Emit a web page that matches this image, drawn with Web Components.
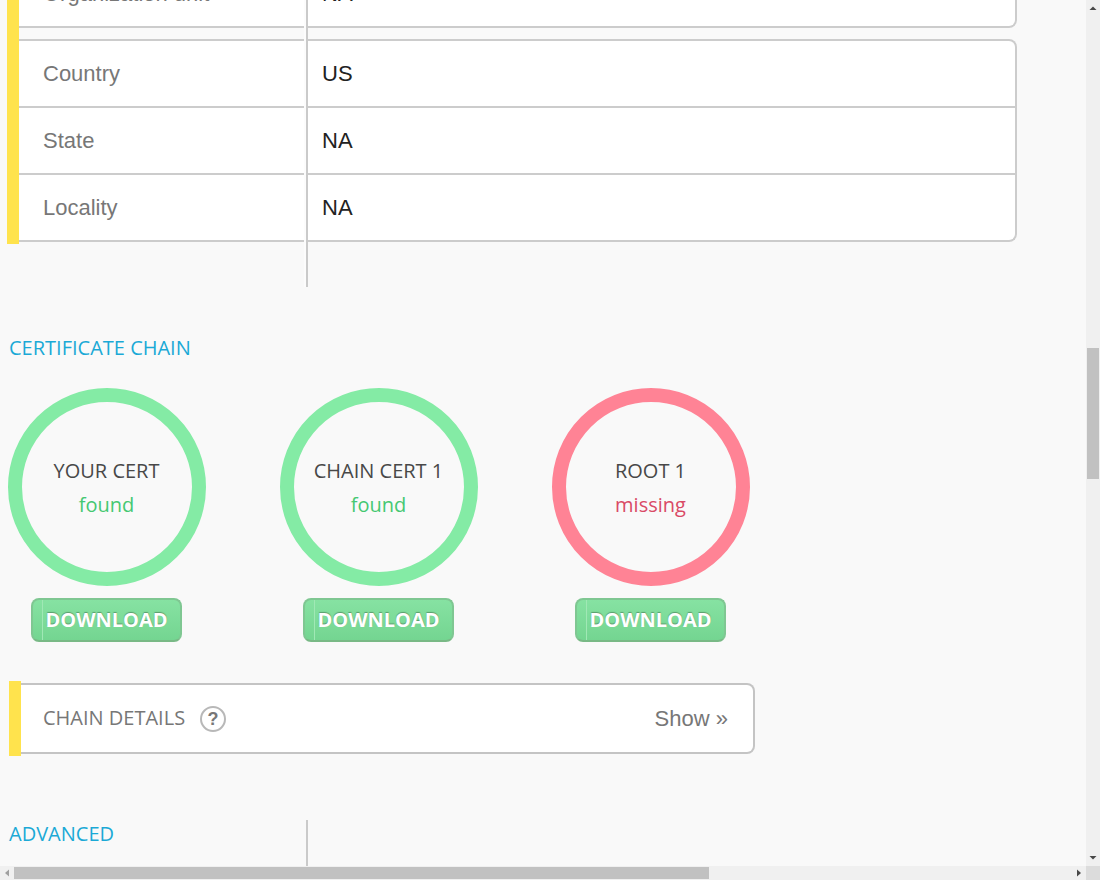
<!DOCTYPE html>
<html lang="en">
<head>
<meta charset="utf-8">
<meta name="viewport" content="width=device-width, initial-scale=1">
<title>Certificate check</title>
<style>
  html, body { margin: 0; height: 100%; }
  body { background: #f9f9f9; color: #222; font-family: "Liberation Sans", Arial, sans-serif; font-size: 22px; --title-font: "Open Sans", "Noto Sans", sans-serif; --line: #cccccc; --accent: #ffe34d; }
</style>
</head>
<body>
<scroll-frame>
  <cert-table></cert-table>
  <section-title>CERTIFICATE CHAIN</section-title>
  <chain-list>
    <chain-cert name="YOUR CERT" status="found"></chain-cert>
    <chain-cert name="CHAIN CERT 1" status="found"></chain-cert>
    <chain-cert name="ROOT 1" status="missing"></chain-cert>
  </chain-list>
  <detail-panel>CHAIN DETAILS</detail-panel>
  <section-title ruled>ADVANCED</section-title>
</scroll-frame>
<script>
function define(name, render) {
  customElements.define(name, class extends HTMLElement {
    constructor() { super(); this.attachShadow({ mode: "open" }); }
    connectedCallback() { this.shadowRoot.innerHTML = render(this); }
  });
}

/* Window frame: a clipped viewport with its two scrollbars */
define("scroll-frame", () => `
<style>
  :host { display: grid; grid-template: minmax(0, 1fr) 14px / minmax(0, 1fr) 14px; height: 100vh; }
  main { overflow: hidden; }
  scroll-bar { min-width: 0; }
  .corner { background: #dcdcdc; }
</style>
<main><slot></slot></main>
<scroll-bar axis="y"></scroll-bar>
<scroll-bar axis="x"></scroll-bar>
<div class="corner"></div>`);

define("scroll-bar", el => {
  const y = el.getAttribute("axis") === "y";
  const before = y ? "M3.5 10 L7 6.5 L10.5 10Z" : "M9 3.5 L5 7 L9 10.5Z";
  const after = y ? "M3.5 4 L7 7.5 L10.5 4Z" : "M5 3.5 L9 7 L5 10.5Z";
  return `
<style>
  :host { display: flex; flex-direction: ${y ? "column" : "row"}; background: #f0f0f0; }
  svg { flex: none; width: 14px; height: 14px; fill: #484848; }
  .off { fill: #a0a0a0; }
  .track { flex: 1; display: flex; flex-direction: ${y ? "column" : "row"}; ${y ? "padding: 0 1px" : "padding: 1px 0"}; }
  .gap { flex: ${y ? "334" : "0"}; }
  .thumb { flex: ${y ? "131" : "695"}; background: #c1c1c1; }
  .rest { flex: ${y ? "373" : "363"}; }
</style>
<svg viewBox="0 0 14 14" class="${y ? "" : "off"}"><path d="${before}"/></svg>
<div class="track"><div class="gap"></div><div class="thumb"></div><div class="rest"></div></div>
<svg viewBox="0 0 14 14"><path d="${after}"/></svg>`;
});

/* Subject fields; the list is scrolled so that its first row is cut by the top edge */
define("cert-table", () => {
  const row = ([k, v]) => `<tr><th scope="row">${k}</th><td>${v}</td></tr>`;
  const table = rows => `<table><tbody>${rows.map(row).join("")}</tbody></table>`;
  return `
<style>
  :host { display: block; position: relative; margin: -41px 69px 0 7px; padding-bottom: 43px; }
  /* column rule, with the small break it leaves in the row lines */
  :host::after { content: ""; position: absolute; left: 297px; top: 0; bottom: 0; width: 4px; background: linear-gradient(90deg, #fcfcfc 2px, #cacaca 2px); }
  .groups { display: grid; gap: 11px; border-left: 12px solid var(--accent); padding-bottom: 2px; }
  table { width: 100%; table-layout: fixed; border-collapse: separate; border-spacing: 0; background: #fff; border-radius: 0 8px 8px 0; }
  th, td { box-sizing: border-box; height: 67px; padding: 0; text-align: left; font-weight: 400; line-height: 26px; border-bottom: 2px solid var(--line); }
  tr:first-child th, tr:first-child td { height: 69px; border-top: 2px solid var(--line); }
  th { width: 288px; padding-left: 24px; color: #777; }
  td { padding-left: 15px; border-right: 2px solid var(--line); }
  tr:first-child td { border-top-right-radius: 8px; }
  tr:last-child td { border-bottom-right-radius: 8px; }
</style>
<div class="groups">
  ${table([["Organization unit", "NA"]])}
  ${table([["Country", "US"], ["State", "NA"], ["Locality", "NA"]])}
</div>`;
});

define("section-title", () => `
<style>
  :host { display: flex; margin: 47px 0 0 9px; height: 28px; }
  :host([ruled]) { margin-top: 64px; height: 60px; }
  h2 { box-sizing: border-box; margin: 0; font: 400 20px/28px var(--title-font); color: #1ba9d6; flex: 0 0 299px; }
  :host([ruled]) h2 { border-right: 2px solid #cacaca; }
</style>
<h2><slot></slot></h2>`);

define("chain-list", () => `
<style>
  :host { display: grid; grid-template-columns: repeat(3, minmax(0, 272px)); margin: 26px 0 0 7px; }
</style>
<slot></slot>`);

define("chain-cert", el => {
  const ok = el.getAttribute("status") === "found";
  return `
<style>
  :host { display: grid; justify-items: center; gap: 12px; width: 199px; font: 20px/34px var(--title-font); }
  .ring { box-sizing: border-box; width: 198px; height: 198px; padding-top: 2px; border-radius: 50%; border: 14px solid ${ok ? "#84eba5" : "#ff8395"}; display: flex; flex-direction: column; align-items: center; justify-content: center; }
  .name { color: #484848; }
  .status { color: ${ok ? "#45c872" : "#d94a66"}; }
  button { box-sizing: border-box; width: 151px; height: 44px; padding: 0; border: 2px solid #7fc792; border-bottom-color: #79b986; border-radius: 8px; background: linear-gradient(90deg, transparent 9px, #a0e8b5 9px 10px, transparent 10px), linear-gradient(#86e2a2, #74d591); color: #fff; font: 700 20px/36px var(--title-font); text-shadow: 0 -1px 1px #5a9c6c; }
</style>
<div class="ring"><span class="name">${el.getAttribute("name")}</span><span class="status">${el.getAttribute("status")}</span></div>
<button type="button">DOWNLOAD</button>`;
});

define("detail-panel", () => `
<style>
  :host { display: block; max-width: 746px; box-sizing: border-box; margin: 39px 20px 0 9px; border-left: 12px solid var(--accent); padding: 2px 0; }
  .box { display: flex; align-items: center; height: 67px; border: solid #c4c4c4; border-width: 2px 2px 2px 0; border-radius: 0 8px 8px 0; background: #fff; padding: 0 25px 0 22px; color: #777; }
  h3 { margin: 0 15px 0 0; padding-bottom: 2px; font: 400 20px/28px var(--title-font); }
  .help { width: 26px; height: 26px; padding: 0; border: 2px solid #b8b8b8; border-radius: 50%; background: #fff; color: #777; font: 700 18px/22px "Liberation Sans", Arial, sans-serif; }
  a { margin-left: auto; color: #777; text-decoration: none; }
</style>
<div class="box"><h3><slot></slot></h3><button class="help" type="button" aria-label="About chain details">?</button><a href="#details">Show »</a></div>`);
</script>
</body>
</html>
